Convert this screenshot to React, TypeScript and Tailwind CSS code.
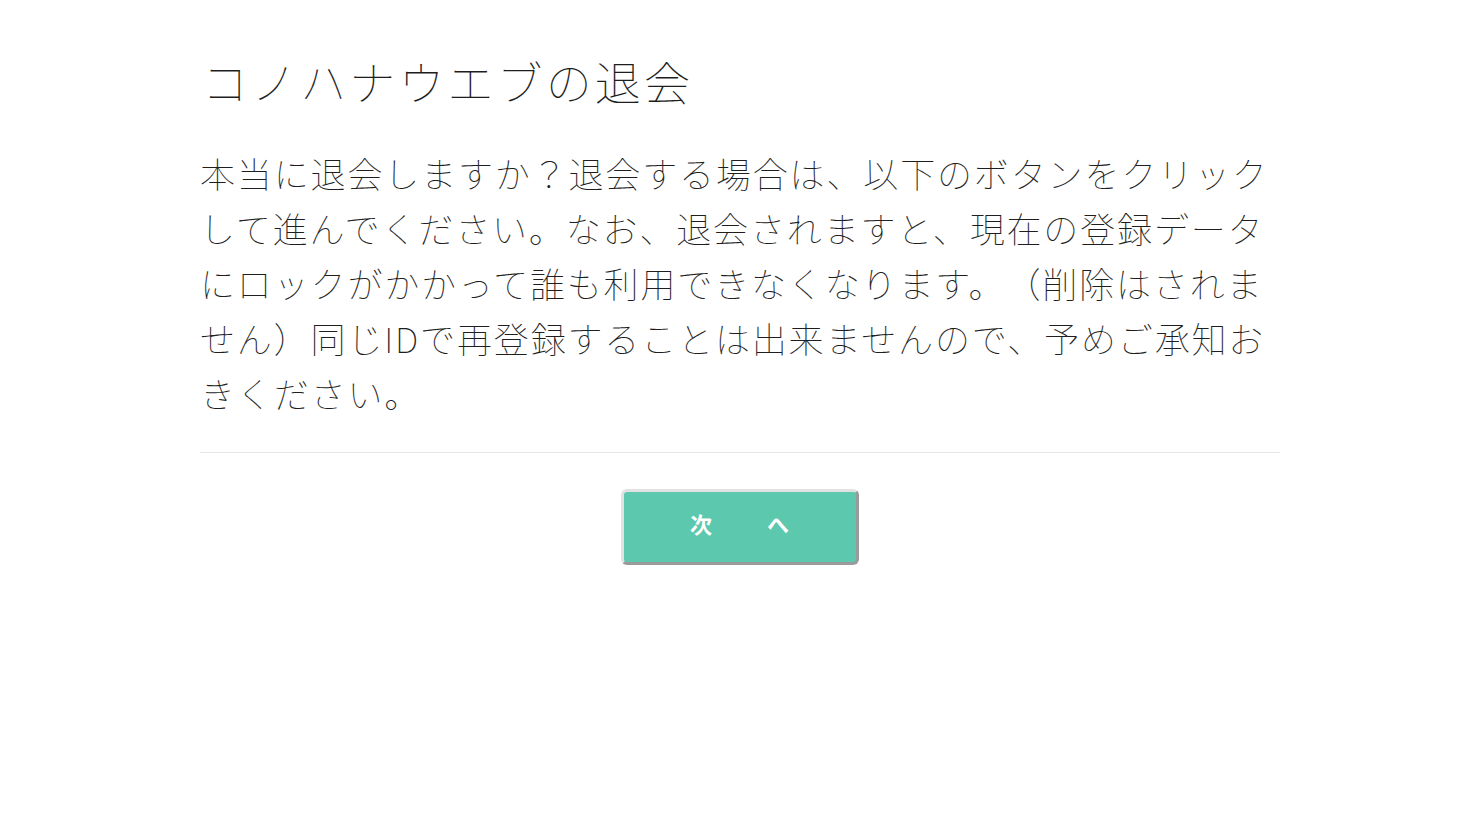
import React from 'react';

const jp = { fontFamily: '"Noto Sans CJK JP", "Noto Sans", sans-serif' };

export default function App() {
  return (
    <div className="min-h-screen bg-white text-[#1e1e1e] [text-spacing-trim:space-all]" style={jp}>
      <div className="mx-auto w-[1080px] pt-[48px]">
        <h1 className="text-[46px] font-thin leading-[64px] tracking-[3.1px] pl-[2px]">
          コノハナウエブの退会
        </h1>
        <p className="mt-[33px] text-[35px] font-thin leading-[55px] tracking-[1.85px]">
          本当に退会しますか？退会する場合は、以下のボタンをクリックして進んでください。なお、退会されますと、現在の登録データにロックがかかって誰も利用できなくなります。（削除はされません）同じIDで再登録することは出来ませんので、予めご承知おきください。
        </p>
        <hr className="mt-[32px] border-0 border-t border-[#e6e6e6]" />
        <div className="flex justify-center pt-[36px]">
          <button className="box-border w-[238px] h-[76px] pb-[8px] rounded-[6px] bg-[#5cc8ad] border-[3px] border-t-[#e2e2e2] border-l-[#e2e2e2] border-r-[#9a9a9a] border-b-[#9a9a9a] text-white text-[22px] font-bold tracking-[1px]">
            次<span className="inline-block w-[54px]" />へ
          </button>
        </div>
      </div>
    </div>
  );
}
